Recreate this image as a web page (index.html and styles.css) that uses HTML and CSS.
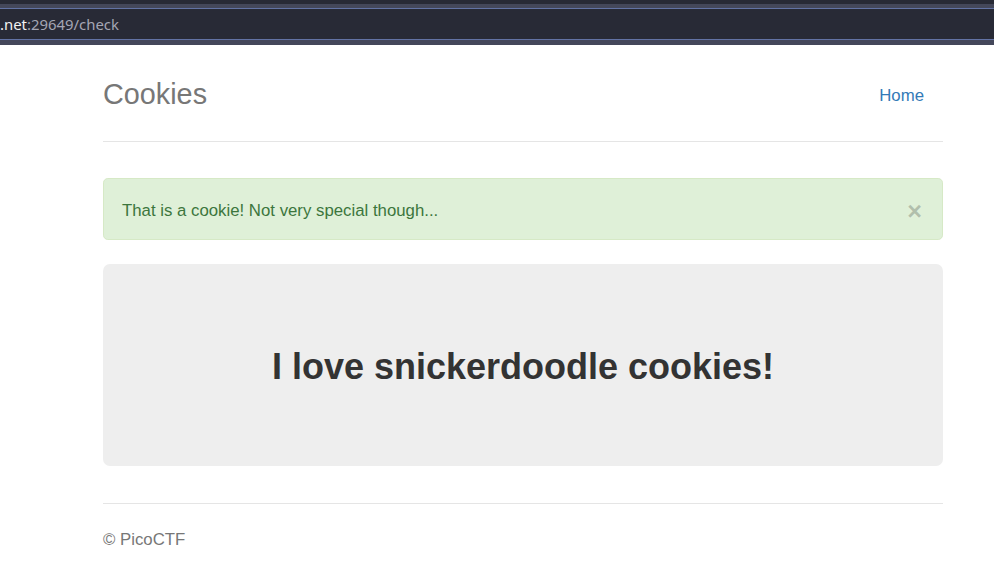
FILE: index.html
```html
<!DOCTYPE html>
<html lang="en">
<head>
<meta charset="utf-8">
<title>Cookies</title>
<link rel="stylesheet" href="styles.css">
</head>
<body>
  <div class="browser-chrome">
    <div class="tabstrip"></div>
    <div class="urlbar"><span class="host">.net</span><span class="path">:29649/check</span></div>
    <div class="toolstrip"></div>
  </div>
  <div class="container">
    <div class="header">
      <h3 class="brand">Cookies</h3>
      <nav class="nav"><a href="#" class="nav-link">Home</a></nav>
    </div>
    <div class="alert">
      <span class="alert-text">That is a cookie! Not very special though...</span>
      <button class="close" type="button">&times;</button>
    </div>
    <div class="jumbotron">
      <h2 class="jumbo-title">I love snickerdoodle cookies!</h2>
    </div>
    <footer class="footer">
      <p class="footer-text">&copy; PicoCTF</p>
    </footer>
  </div>
</body>
</html>
```
FILE: styles.css
```css
* { box-sizing: border-box; }
html, body { margin: 0; padding: 0; background: #fff; }
body {
  font-family: "Liberation Sans", Arial, sans-serif;
  font-size: 16.8px;
  line-height: 24px;
  color: #333;
}

.browser-chrome { background: #282a36; }
.tabstrip {
  border-top: 4px solid #282a36;
  background: #44475a;
  border-bottom: 1px solid #6272a4;
  height: 9px;
}
.urlbar {
  height: 30px;
  background: #282a36;
  display: flex;
  align-items: center;
  padding-top: 0;
  font-family: "Noto Sans", "DejaVu Sans", sans-serif;
  font-size: 14.9px;
  line-height: 26px;
}
.host { color: #f2f2f2; }
.path { color: #a4a6b4; }
.toolstrip {
  height: 6px;
  border-top: 1px solid #6272a4;
  background: #44475a;
}

.container {
  width: 840px;
  margin-left: 103px;
  padding-top: 24px;
}

.header {
  display: flex;
  justify-content: space-between;
  align-items: flex-start;
  padding-bottom: 23px;
  border-bottom: 1px solid #e5e5e5;
  margin-bottom: 36px;
}
.brand {
  margin: 0;
  padding-top: 1px;
  font-size: 28.8px;
  line-height: 48px;
  font-weight: 400;
  color: #777;
}
.nav { display: flex; margin-right: 1px; }
.nav-link {
  display: block;
  padding: 15px 18px 9px;
  line-height: 24px;
  color: #337ab7;
  text-decoration: none;
}

.alert {
  display: flex;
  justify-content: space-between;
  align-items: center;
  padding: 20px 20px 16px 18px;
  margin-bottom: 24px;
  background: #dff0d8;
  border: 1px solid #d6e9c6;
  border-radius: 4.8px;
  color: #3c763d;
  height: 62px;
}
.close {
  font-family: "Liberation Sans", Arial, sans-serif;
  font-size: 25.2px;
  font-weight: 700;
  line-height: 1;
  color: #000;
  opacity: 0.2;
  text-shadow: 0 1px 0 #fff;
  background: transparent;
  border: 0;
  padding: 0;
  margin: 0;
  position: relative;
  top: 1px;
  cursor: pointer;
}

.jumbotron {
  background: #eee;
  border-radius: 7px;
  height: 202px;
  padding-top: 81px;
  text-align: center;
}
.jumbo-title {
  margin: 0;
  font-size: 36px;
  line-height: 43.2px;
  font-weight: 700;
  color: #333;
}

.footer {
  margin-top: 37px;
  border-top: 1px solid #e5e5e5;
  padding-top: 24px;
  color: #777;
}
.footer-text { margin: 0; }
```
